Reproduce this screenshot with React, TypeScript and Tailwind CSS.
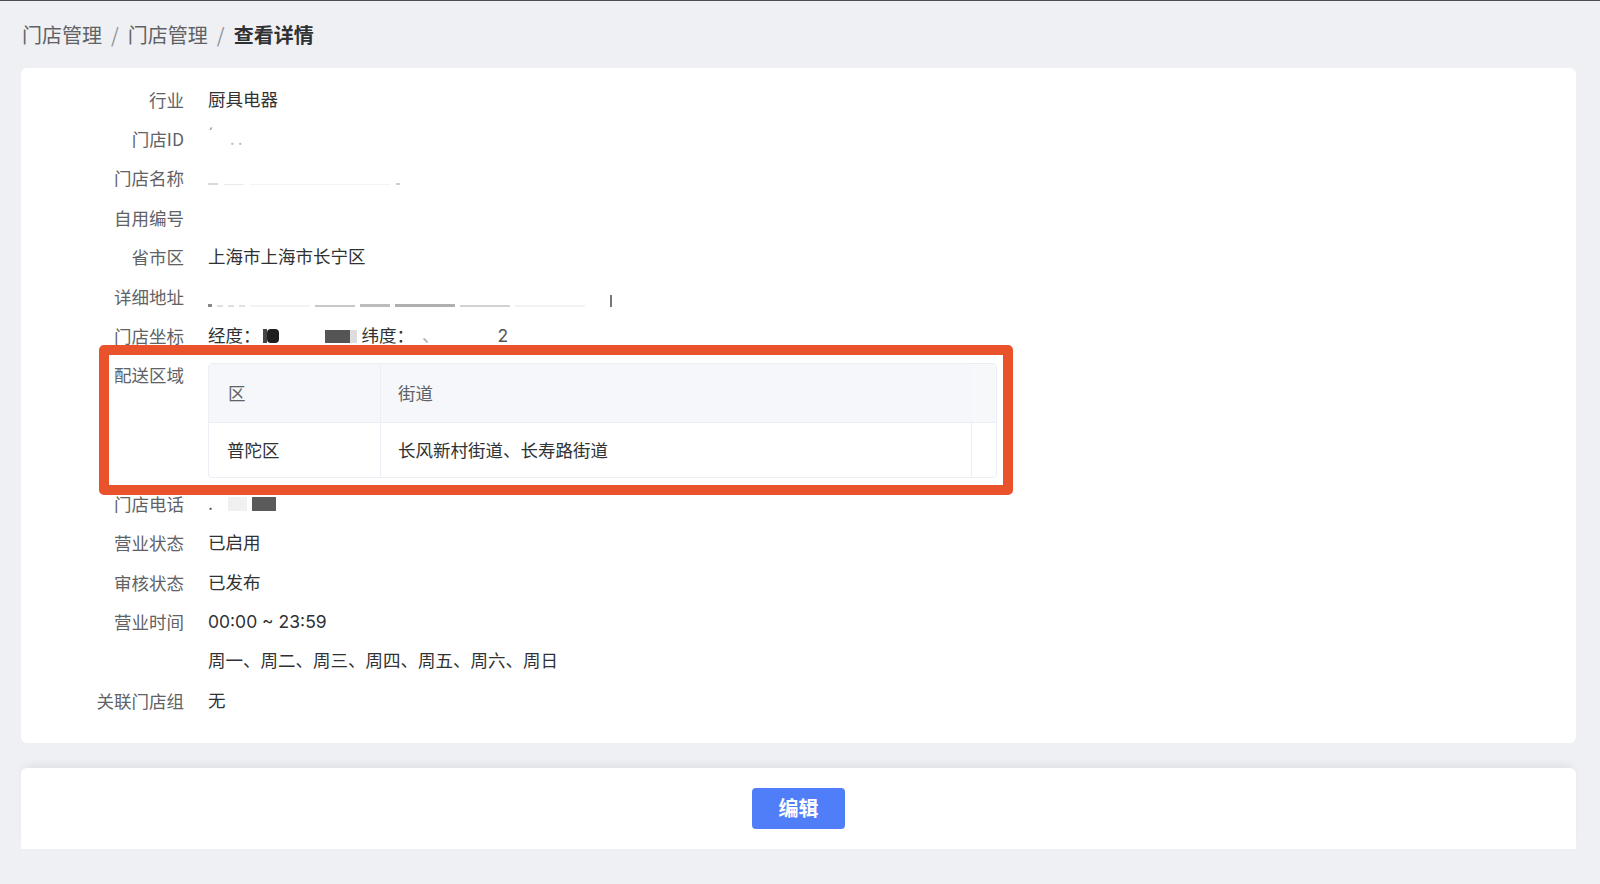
import React from "react";

const font = { fontFamily: '"Noto Sans CJK SC", "Noto Sans", sans-serif' };
const valueFont = { fontFamily: 'Inter, "Noto Sans CJK SC", sans-serif' };

function Row({ label, children }: { label: string; children?: React.ReactNode }) {
  return (
    <div className="flex h-[39.4px] items-center">
      <div className="w-[163px] shrink-0 text-right text-[17.5px] text-[#606266]">{label}</div>
      <div style={valueFont} className="ml-[24px] flex items-center text-[17.5px] text-[#303133]">
        {children}
      </div>
    </div>
  );
}

export default function App() {
  return (
    <div style={font} className="min-h-screen w-full border-t border-[#4c4c56] bg-[#eff0f4]">
      {/* breadcrumb */}
      <div className="flex h-[67px] items-center px-[22px] text-[20px]">
        <span className="text-[#606266]">门店管理</span>
        <span className="mx-[9px] text-[#909399]">/</span>
        <span className="text-[#606266]">门店管理</span>
        <span className="mx-[9px] text-[#909399]">/</span>
        <span className="font-bold text-[#303133]">查看详情</span>
      </div>

      {/* detail card */}
      <div className="relative ml-[21px] mr-[24px] rounded-md bg-white pb-[22px] pt-[12px]">
        <Row label="行业">厨具电器</Row>
        <Row label="门店ID">
          <span className="-mt-2 text-[#999]">´</span>
          <span className="ml-[16px] tracking-[3px] text-[#bbb]">..</span>
        </Row>
        <Row label="门店名称">
          <div className="mt-3 flex items-end gap-[6px]">
            <span className="h-[2px] w-[10px] bg-[#d9d9d9]" />
            <span className="h-[1px] w-[20px] bg-[#eaeaea]" />
            <span className="h-[1px] w-[140px] bg-[#f4f4f4]" />
            <span className="h-[2px] w-[4px] bg-[#cfcfcf]" />
          </div>
        </Row>
        <Row label="自用编号" />
        <Row label="省市区">上海市上海市长宁区</Row>
        <Row label="详细地址">
          <div className="mt-2 flex items-end gap-[5px]">
            <span className="h-[3px] w-[4px] bg-[#888]" />
            <span className="h-[2px] w-[6px] bg-[#e0e0e0]" />
            <span className="h-[2px] w-[6px] bg-[#e0e0e0]" />
            <span className="h-[2px] w-[6px] bg-[#e0e0e0]" />
            <span className="h-[2px] w-[60px] bg-[#f3f3f3]" />
            <span className="h-[2px] w-[40px] bg-[#c8c8c8]" />
            <span className="h-[3px] w-[30px] bg-[#bdbdbd]" />
            <span className="h-[3px] w-[60px] bg-[#b0b0b0]" />
            <span className="h-[2px] w-[50px] bg-[#d2d2d2]" />
            <span className="h-[2px] w-[70px] bg-[#f2f2f2]" />
            <span className="ml-[20px] h-[12px] w-[2px] bg-[#777]" />
          </div>
        </Row>
        <Row label="门店坐标">
          <span>经度：</span>
          <span className="ml-[2px] h-[14px] w-[4px] bg-[#444]" />
          <span className="h-[14px] w-[12px] rounded-sm bg-[#1e1e1e]" />
          <span className="ml-[46px] h-[13px] w-[25px] bg-[#555]" />
          <span className="h-[13px] w-[7px] bg-[#ddd]" />
          <span className="ml-[5px]">纬度：</span>
          <span className="ml-[8px] text-[#aaa]">、</span>
          <span className="ml-[58px] text-[#555]">2</span>
        </Row>

        {/* delivery area */}
        <div className="flex pb-[6.5px]">
          <div className="flex h-[39.4px] w-[163px] shrink-0 items-center justify-end text-[17.5px] text-[#606266]">
            配送区域
          </div>
          <div className="ml-[24px] mt-[7px] w-[789px] overflow-hidden rounded-[4px] border border-[#ebeef5] text-[17.5px]">
            <div className="flex h-[59px] border-b border-[#ebeef5] bg-[#f5f7fa] text-[#606266]">
              <div className="flex w-[172px] items-center border-r border-[#ebeef5] pl-[19px]">区</div>
              <div className="flex flex-1 items-center pl-[17px]">街道</div>
              <div className="w-[24px] bg-[#f7f8fa]" />
            </div>
            <div className="flex h-[54px] text-[#303133]">
              <div className="flex w-[172px] items-center border-r border-[#ebeef5] pl-[18px]">普陀区</div>
              <div className="flex flex-1 items-center border-r border-[#ebeef5] pl-[17px]">
                长风新村街道、长寿路街道
              </div>
              <div className="w-[24px] bg-white" />
            </div>
          </div>
        </div>

        <Row label="门店电话">
          <span className="text-[#555]">.</span>
          <span className="ml-[15px] h-[14px] w-[19px] bg-[#f0f0f0]" />
          <span className="ml-[5px] h-[14px] w-[24px] bg-[#5a5a5a]" />
        </Row>
        <Row label="营业状态">已启用</Row>
        <Row label="审核状态">已发布</Row>
        <Row label="营业时间">00:00 ~ 23:59</Row>
        <Row label="">周一、周二、周三、周四、周五、周六、周日</Row>
        <Row label="关联门店组">无</Row>

        {/* annotation box */}
        <div className="pointer-events-none absolute left-[78px] top-[277px] h-[150px] w-[914px] rounded-[5px] border-[10px] border-[#e9522b]" />
      </div>

      {/* footer card */}
      <div className="ml-[21px] mr-[24px] mt-[25px] flex h-[81px] items-center justify-center rounded-t-md bg-white shadow-[0_-6px_10px_-4px_rgba(0,0,0,0.08)]">
        <button className="h-[41px] w-[93px] rounded-[4px] bg-[#4f7ef8] text-[20px] font-bold text-white">
          编辑
        </button>
      </div>
    </div>
  );
}
